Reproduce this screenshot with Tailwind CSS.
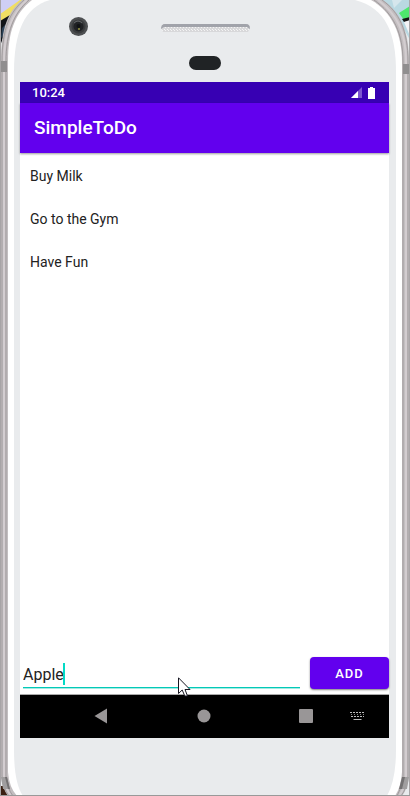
<!DOCTYPE html>
<html lang="en">
<head>
<meta charset="utf-8">
<meta name="viewport" content="width=device-width, initial-scale=1">
<title>SimpleToDo</title>
<script src="https://cdn.jsdelivr.net/npm/@tailwindcss/browser@4"></script>
</head>
<body class="relative flex h-screen flex-col overflow-hidden bg-[#e8eaec] font-[Roboto,sans-serif] text-[#222]">
  <!-- phone body -->
  <svg class="absolute inset-0 -z-10 h-full w-full" viewBox="0 0 410 796" preserveAspectRatio="none" aria-hidden="true">
    <rect width="410" height="796" fill="#e9ebed"/>
    <path d="M0 0H27L0 42Z" fill="#cfcff4"/>
    <path d="M3 12L20 0H27L0 30V14Z" fill="#f0de62"/>
    <path d="M0 21L10 15L6 30L0 46Z" fill="#111418"/>
    <path d="M2 28L6 24L4 35L1 38Z" fill="#2c4257"/>
    <path d="M378 0H410V40L400 22Z" fill="#b9d9e2"/>
    <path d="M392 0L402 0L394 8Z" fill="#d5e6ec"/>
    <path d="M399 13L410 6V18L404 20Z" fill="#4ee86d"/>
    <path d="M402 19L410 17V21L404 22Z" fill="#141414"/>
    <path d="M404 22L410 20V36Z" fill="#f4f4f6"/>
    <path d="M0 786H5L8 796H0Z" fill="#3b2012"/>
    <path d="M22 0C8 12 1 27 1 62V776Q2 788 8 796H402Q408 788 409 776V62C409 30 400 12 383 0Z" fill="#c3bec0"/>
    <path d="M24 0C10 12 2 28 2 62V776Q3 788 9 796M382 0C399 12 408 30 408 62V776Q407 788 401 796" fill="none" stroke="#a29d9f"/>
    <path d="M27 0C13 12 4 30 4 62V776Q5 788 11 796M378 0C397 14 406 32 406 62V776Q405 788 399 796" fill="none" stroke="#d3cdd0" stroke-width="2"/>
    <path d="M29 0C14 13 6 32 6 62V776Q7 788 13 796M374 0C394 14 403 34 403 62V776Q402 788 397 796" fill="none" stroke="#a09b9d"/>
    <path d="M32 0C14 14 8 33 8 62V772Q9 787 17 796H395Q401 787 402 772V62C402 34 392 12 371 0Z" fill="#fff"/>
    <path d="M50 0C24 7 14 33 14 72V750Q14 783 23 796H387Q396 780 396 750V72C396 33 386 8 355 0Z" fill="#e9ebed"/>
    <path d="M1 61H7V72H1ZM403 64H409V74H403Z" fill="#908e8f"/>
    <path d="M1 777H7L10 789H3ZM403 777H409L407 789H400Z" fill="#a09e9f"/>
    <path d="M5 777H7L10 789H8ZM402 777H405L402 789H399Z" fill="#737172"/>
    <path d="M0.500 0V796" stroke="#a7a4a6"/>
    <path d="M409.500 0V796" stroke="#aaa6a8"/>
    <path d="M0 795.500H410" stroke="#999"/>
  </svg>

  <!-- camera, speaker and sensor -->
  <svg class="h-[82px] w-full shrink-0" viewBox="0 0 410 82" aria-hidden="true">
    <defs>
      <pattern id="mesh" width="3" height="3" patternUnits="userSpaceOnUse"><rect width="3" height="3" fill="#d8d8da"/><path d="M0 0h1v1H0zM2 2h1v1H2z" fill="#f4f4f4"/></pattern>
    </defs>
    <circle cx="78.500" cy="26.500" r="9.500" fill="#4e5052"/>
    <circle cx="78.500" cy="26.500" r="7" fill="#3a3c3e"/>
    <circle cx="78.500" cy="26.500" r="5" fill="#202225"/>
    <path d="M74 23q4-4 8 0" stroke="#65686a" fill="none"/>
    <circle cx="78.500" cy="26" r="2" fill="#101214"/>
    <path d="M78 28h2v2h-2z" fill="#777738"/>
    <path d="M161 28Q161 24 165 24H246Q250 24 250 28L248 32H163Z" fill="url(#mesh)"/>
    <path d="M161 29Q161 24 165 24H246Q250 24 250 29L247 27H164Z" fill="#a1a3aa"/>
    <rect x="189" y="56" width="32" height="14" rx="7" fill="#202325"/>
  </svg>

  <main class="mr-[21px] mb-[58px] ml-5 flex min-h-0 flex-1 flex-col bg-white">
    <div class="flex h-[21px] shrink-0 items-center justify-between bg-[#3700b3] pr-[13px] pl-3 text-[13px] font-medium text-white">
      <time class="pt-px">10:24</time>
      <svg class="h-3 w-7" viewBox="0 0 28 12" aria-label="Signal and battery" role="img">
        <path d="M3 11L14 0V11Z" fill="#7c55cf"/>
        <path d="M3 11L10 4V11Z" fill="#fff"/>
        <path d="M20 1H22V0H25V1H27V12H20Z" fill="#fff"/>
      </svg>
    </div>
    <header class="relative flex h-[50px] shrink-0 items-center bg-[#6200ee] px-[14px] pt-px shadow-[0_1px_2px_rgba(0,0,0,0.4)]">
      <h1 class="text-[19px] font-medium text-white">SimpleToDo</h1>
    </header>
    <ul class="flex-1 pt-px text-sm">
      <li class="flex h-[43px] items-center px-[10px]">Buy Milk</li>
      <li class="flex h-[43px] items-center px-[10px]">Go to the Gym</li>
      <li class="flex h-[43px] items-center px-[10px]">Have Fun</li>
    </ul>
    <form class="relative flex shrink-0 items-end gap-[10px] pb-[5px] pl-[3px]" onsubmit="return false">
      <div class="relative mb-px flex h-[26px] min-w-0 flex-1 border-b border-[#03c9b7] shadow-[0_1px_0_#a0ebe3]">
        <input class="w-full bg-transparent pt-px text-base leading-6 outline-none" type="text" value="Apple" aria-label="New item">
        <span class="absolute top-px left-10 h-[22px] w-[2px] bg-[#03dac5]"></span>
      </div>
      <button class="h-8 w-[79px] rounded bg-[#6200ee] pt-px text-[13px] font-medium tracking-[1px] text-white shadow-[0_1px_2px_rgba(0,0,0,0.5)]" type="submit">ADD</button>
      <svg class="absolute top-[20px] left-[158px] h-[20px] w-[13px]" viewBox="0 0 13 20" aria-hidden="true">
        <path d="M0.500 0.800V16.500L4.200 13L6.800 19H9.500L7 12.500H12Z" fill="#fff" stroke="#171722"/>
      </svg>
    </form>
    <nav class="grid h-[44px] shrink-0 grid-cols-[81fr_103fr_102fr_83fr] border-t border-[#aaa] bg-black pb-[2px]" aria-label="System navigation">
      <button class="flex items-center justify-end" type="button" aria-label="Back"><svg class="-mr-[7px] h-4 w-[14px]" viewBox="0 0 14 16"><path d="M0.500 8L13 0.500V15.500Z" fill="#999697"/></svg></button>
      <button class="flex items-center justify-end" type="button" aria-label="Home"><svg class="-mr-[7px] h-[14px] w-[14px]" viewBox="0 0 14 14"><circle cx="7" cy="7" r="6.500" fill="#999697"/></svg></button>
      <button class="flex items-center justify-end" type="button" aria-label="Recent apps"><svg class="-mr-[7px] h-[14px] w-[14px]" viewBox="0 0 14 14"><rect width="14" height="14" rx="1" fill="#999697"/></svg></button>
      <button class="flex items-center justify-center pl-[19px]" type="button" aria-label="Keyboard"><svg class="h-2 w-[15px]" viewBox="0 0 15 8"><path d="M0 .5h15M1 4.500h13" stroke="#bbb" stroke-dasharray="2 1"/><path d="M1 2.500h13" stroke="#888" stroke-dasharray="1 2"/><path d="M3.500 7.500h8" stroke="#bbb"/></svg></button>
    </nav>
  </main>
</body>
</html>
